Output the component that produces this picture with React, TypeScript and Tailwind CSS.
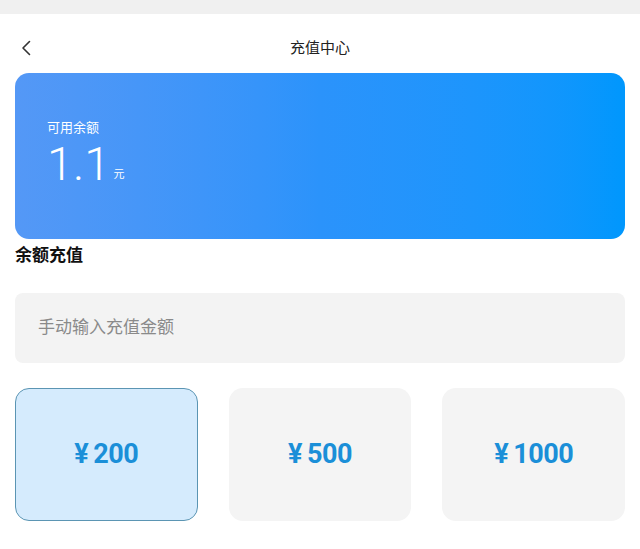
const amounts = [200, 500, 1000];

export default function App() {
  const selected = 200;

  return (
    <div className="w-[640px] h-[549px] bg-white overflow-hidden font-['Roboto','Noto_Sans_CJK_SC',sans-serif]">
      {/* status bar */}
      <div className="h-[14px] bg-[#f0f0f0]" />

      {/* header */}
      <div className="relative h-[59px] flex items-center justify-center">
        <svg className="absolute left-[20px] top-[26px]" width="12" height="16" viewBox="0 0 12 16" fill="none">
          <path d="M9.5 1.5 L3 8 L9.5 14.5" stroke="#333" strokeWidth="1.6" strokeLinecap="round" strokeLinejoin="round" />
        </svg>
        <span className="text-[15px] text-[#222] mt-[9px]">充值中心</span>
      </div>

      <div className="px-[15px]">
        {/* balance card */}
        <div className="h-[166px] rounded-[14px] bg-gradient-to-r from-[#5498f6] via-[#2b93fb] to-[#0097fd] pl-[32px] pt-[46px] text-white">
          <div className="text-[13px] leading-[18px]">可用余额</div>
          <div className="flex items-end mt-[2px]">
            <span className="text-[47px] leading-[50px] font-light">1.1</span>
            <span className="text-[11px] ml-[3px] mb-[6px]">元</span>
          </div>
        </div>

        <div className="mt-[5px] text-[17px] font-bold text-[#111] leading-[22px]">余额充值</div>

        {/* manual input */}
        <div className="mt-[27px] h-[70px] rounded-[8px] bg-[#f3f3f3] flex items-center pl-[23px]">
          <span className="text-[17px] text-[#8a8a8a]">手动输入充值金额</span>
        </div>

        {/* amount options */}
        <div className="mt-[25px] grid grid-cols-3 gap-[31px]">
          {amounts.map((a) => (
            <div
              key={a}
              className={
                a === selected
                  ? "h-[133px] rounded-[14px] bg-[#d5ebfd] border border-[#5b95b3] flex items-center justify-center"
                  : "h-[133px] rounded-[14px] bg-[#f4f4f4] flex items-center justify-center"
              }
            >
              <span className="text-[27px] font-bold text-[#1b8fd8] tracking-[-0.5px]">
                <span className="mr-[5px]">¥</span>
                {a}
              </span>
            </div>
          ))}
        </div>
      </div>
    </div>
  );
}
